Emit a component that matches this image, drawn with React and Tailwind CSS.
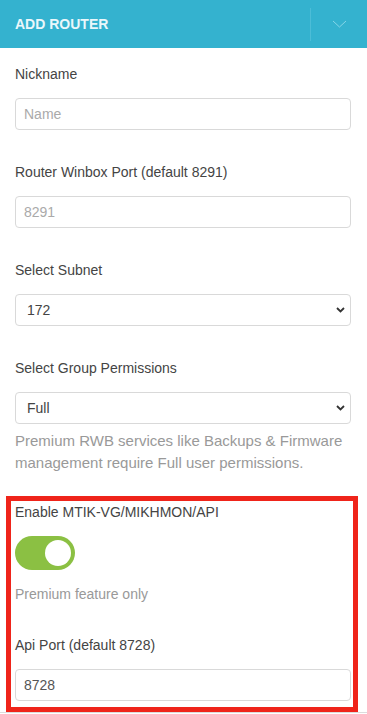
import React from 'react';

const Label = ({ children }) => (
  <label className="block text-[14px] leading-5 text-[#444]">{children}</label>
);

const TextInput = ({ placeholder, value }) => (
  <input
    type="text"
    placeholder={placeholder}
    defaultValue={value}
    className="mt-[14px] block w-full h-8 rounded-[4px] border border-[#d9d9d9] bg-white px-2 text-[14px] text-[#555] placeholder:text-[#aaa] outline-none"
  />
);

const Select = ({ value, options }) => (
  <div className="relative mt-[14px]">
    <select
      defaultValue={value}
      className="block w-full h-8 appearance-none rounded-[4px] border border-[#d9d9d9] bg-white pl-[11px] pr-8 text-[14px] text-[#444] outline-none"
    >
      {options.map((o) => (
        <option key={o}>{o}</option>
      ))}
    </select>
    <svg className="pointer-events-none absolute right-[6px] top-[13px]" width="9" height="6" viewBox="0 0 9 6">
      <path d="M1 1l3.5 3.5L8 1" fill="none" stroke="#333" strokeWidth="1.8" />
    </svg>
  </div>
);

export default function App() {
  return (
    <div className="relative w-[367px] h-[714px] overflow-hidden bg-white" style={{ fontFamily: '"Liberation Sans", Arial, sans-serif' }}>
      <div className="flex h-12 items-center bg-[#34b2cf]">
        <h1 className="pl-[15px] text-[14px] font-bold text-[#eaf7fb]">ADD ROUTER</h1>
        <div className="ml-auto h-[33px] w-px bg-[#4cbdd7]" />
        <div className="flex w-[56px] items-center justify-center">
          <svg width="15" height="8" viewBox="0 0 15 8">
            <path d="M1 1l6.5 6L14 1" fill="none" stroke="#86d6e8" strokeWidth="1" />
          </svg>
        </div>
      </div>

      <form className="h-[665px] border-b border-[#dcdcdc] pl-[15px] pr-[16px]">
        <div className="pt-[16px]">
          <Label>Nickname</Label>
          <TextInput placeholder="Name" />
        </div>
        <div className="pt-[32px]">
          <Label>Router Winbox Port (default 8291)</Label>
          <TextInput placeholder="8291" />
        </div>
        <div className="pt-[32px]">
          <Label>Select Subnet</Label>
          <Select value="172" options={['172', '10', '192']} />
        </div>
        <div className="pt-[32px]">
          <Label>Select Group Permissions</Label>
          <Select value="Full" options={['Full', 'Read', 'Write']} />
          <p className="mt-[6px] text-[15px] leading-[22px] text-[#999]">
            Premium RWB services like Backups &amp; Firmware management require Full user permissions.
          </p>
        </div>
        <div className="pt-[28px]">
          <Label>Enable MTIK-VG/MIKHMON/API</Label>
          <button type="button" className="mt-[14px] flex h-[34px] w-[60px] items-center justify-end rounded-full bg-[#8bc043] pr-1">
            <span className="h-[26px] w-[26px] rounded-full bg-white" />
          </button>
          <p className="mt-[14px] text-[14px] leading-5 text-[#999]">Premium feature only</p>
        </div>
        <div className="pt-[31px]">
          <Label>Api Port (default 8728)</Label>
          <TextInput value="8728" />
        </div>
      </form>

      <div className="pointer-events-none absolute left-[6px] top-[496px] h-[216px] w-[352px] border-[5px] border-[#ef241a]" />
    </div>
  );
}
